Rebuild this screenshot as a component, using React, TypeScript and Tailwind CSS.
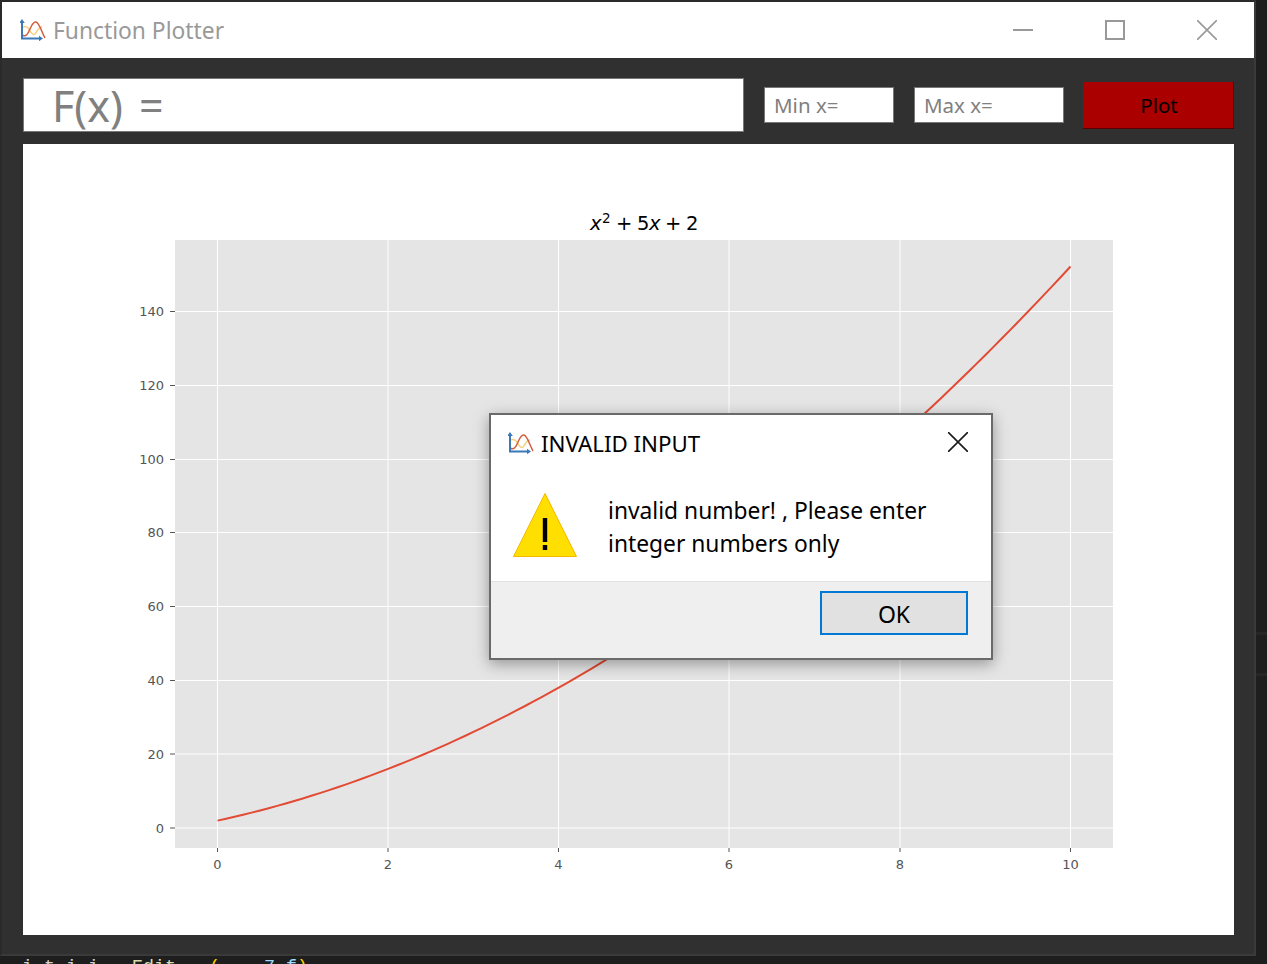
import React from "react"

const xTicks = [
  { label: "0", x: 217.5 },
  { label: "2", x: 388 },
  { label: "4", x: 558.5 },
  { label: "6", x: 729 },
  { label: "8", x: 900 },
  { label: "10", x: 1070.5 },
]

const yTicks = [
  { label: "0", y: 828 },
  { label: "20", y: 754 },
  { label: "40", y: 680.5 },
  { label: "60", y: 606.5 },
  { label: "80", y: 532.5 },
  { label: "100", y: 459.5 },
  { label: "120", y: 385.5 },
  { label: "140", y: 311.5 },
]

function curvePath() {
  const pts: string[] = []
  for (let i = 0; i <= 100; i++) {
    const v = i / 10
    const px = 217.5 + v * 85.3
    const py = 828 - 3.694 * (v * v + 5 * v + 2)
    pts.push(`${px.toFixed(2)},${py.toFixed(2)}`)
  }
  return "M" + pts.join(" L")
}

function AppIcon({ className }: { className: string }) {
  return (
    <svg viewBox="0 0 26 22" fill="none" className={className}>
      <path d="M1 9 C4 7 7 7 9 10 C11 14 13 16.5 15 15 C17 13 18 8 22 8" stroke="#f7cf7a" strokeWidth="1.4" />
      <path d="M2 16 C6 18.5 8 15 10 10 C12 5 14 2.5 16 3 C19.5 4 21.5 13 25 19" stroke="#d2603f" strokeWidth="1.5" />
      <path d="M2 3 V19.5 H20" stroke="#3a78b8" strokeWidth="2" />
      <path d="M2 0 L4.8 4 H-0.8 Z M23 19.5 L19 16.8 V22.2 Z" fill="#3a78b8" />
    </svg>
  )
}

function Chart() {
  return (
    <svg viewBox="23 144 1211 791" className="block w-full h-full" style={{ fontFamily: '"DejaVu Sans", sans-serif' }}>
      <rect x="175" y="240" width="938" height="608" fill="#e5e5e5" />
      {xTicks.map((t) => (
        <g key={t.label}>
          <line x1={t.x} x2={t.x} y1="240" y2="848" stroke="#fff" strokeWidth="1" />
          <line x1={t.x} x2={t.x} y1="848" y2="852" stroke="#555" strokeWidth="1" />
          <text x={t.x} y="869" textAnchor="middle" fontSize="13" fill="#555">
            {t.label}
          </text>
        </g>
      ))}
      {yTicks.map((t) => (
        <g key={t.label}>
          <line x1="175" x2="1113" y1={t.y} y2={t.y} stroke="#fff" strokeWidth="1" />
          <line x1="170" x2="175" y1={t.y} y2={t.y} stroke="#555" strokeWidth="1" />
          <text x="164" y={t.y + 4.5} textAnchor="end" fontSize="13" fill="#555">
            {t.label}
          </text>
        </g>
      ))}
      <path d={curvePath()} fill="none" stroke="#e24a33" strokeWidth="2" />
      <text y="230" fontSize="19.5" fill="#000">
        <tspan x="590" fontStyle="italic">x</tspan>
        <tspan x="602" y="223" fontSize="13.5">2</tspan>
        <tspan x="616" y="230">+</tspan>
        <tspan x="637">5</tspan>
        <tspan x="649" fontStyle="italic">x</tspan>
        <tspan x="665">+</tspan>
        <tspan x="686">2</tspan>
      </text>
    </svg>
  )
}

function Dialog() {
  return (
    <div className="absolute left-[489px] top-[413px] w-[504px] h-[247px] border-2 border-[#6a6a6a] bg-white shadow-[0_4px_14px_rgba(0,0,0,0.35)] flex flex-col text-black">
      <div className="flex items-center h-[56px] pl-[17px] pr-[23px]">
        <AppIcon className="w-[26px] h-[22px]" />
        <span className="ml-[7px] pt-[2px] text-[22.3px] leading-none">INVALID INPUT</span>
        <svg viewBox="0 0 20 20" className="ml-auto w-5 h-5 mb-[2px]" stroke="#1a1a1a" strokeWidth="1.6">
          <path d="M0 0 L20 20 M20 0 L0 20" />
        </svg>
      </div>
      <div className="flex flex-1 pl-[22px]">
        <svg viewBox="0 0 64 64" className="w-[64px] h-[64px] mt-[22px]">
          <path d="M32 .5 L63.5 63.5 H.5 Z" fill="#ffdf00" stroke="#f5b800" strokeWidth="1" />
          <rect x="29.8" y="25" width="4.4" height="24" fill="#000" />
          <rect x="29.8" y="52" width="4.4" height="5" fill="#000" />
        </svg>
        <p className="ml-[31px] mt-[24px] text-[22.8px] leading-[32.5px]">
          invalid number! , Please enter
          <br />
          integer numbers only
        </p>
      </div>
      <div className="h-[77px] bg-[#efefef] border-t border-[#e2e2e2] flex justify-end items-start pt-[9px] pr-[23px]">
        <div className="w-[148px] h-[44px] border-2 border-[#0078d4] bg-[#e1e1e1] flex items-center justify-center pt-[2px] text-[23px]">
          OK
        </div>
      </div>
    </div>
  )
}

export default function App() {
  return (
    <div
      className="relative w-[1267px] h-[964px] overflow-hidden bg-[#1e1e1e]"
      style={{ fontFamily: '"Noto Sans", "Open Sans", sans-serif' }}
    >
      <div className="w-[1256px] h-[956px] border-2 border-[#2a2a2a] bg-[#303030] border-b-[#3a3a3a] border-r-[#3a3a3a]">
        <div className="h-[56px] bg-white flex items-center pl-[18px] w-[1252px]">
          <AppIcon className="w-[26px] h-[22px]" />
          <span className="ml-[7px] pt-[2px] text-[22.8px] leading-none text-[#999]">Function Plotter</span>
          <div className="ml-auto flex items-center gap-[72px] pr-[37px] pb-[1px]">
            <div className="w-5 h-[2px] bg-[#999]" />
            <div className="w-5 h-5 border-2 border-[#999]" />
            <svg viewBox="0 0 20 20" className="w-5 h-5" stroke="#999" strokeWidth="1.6">
              <path d="M0 0 L20 20 M20 0 L0 20" />
            </svg>
          </div>
        </div>
        <div className="flex items-center h-[86px] pl-[21px] pt-[8px]">
          <div className="w-[721px] h-[54px] bg-white border border-[#777] flex items-center pl-[28px] pt-[2px] text-[43px] [word-spacing:5px] text-[#808080]">
            F(x) =
          </div>
          <div className="ml-[20px] w-[130px] h-[36px] bg-white border border-[#777] flex items-center pl-[9px] pt-[1px] text-[20.5px] text-[#808080]">
            Min x=
          </div>
          <div className="ml-[20px] w-[150px] h-[36px] bg-white border border-[#777] flex items-center pl-[9px] pt-[1px] text-[20.5px] text-[#808080]">
            Max x=
          </div>
          <div className="ml-[19px] w-[151px] h-[47px] bg-[#aa0000] border-b border-r border-[#5a0000] flex items-center justify-center pl-[2px] pt-[1px] text-[20.5px] text-black">
            Plot
          </div>
        </div>
        <div className="ml-[21px] w-[1211px] h-[791px] bg-white">
          <Chart />
        </div>
      </div>
      <div className="h-[8px] overflow-hidden pt-[2px] pl-[22px] whitespace-pre text-[18.33px] leading-[20px] text-[#dcdcaa]" style={{ fontFamily: '"Liberation Mono", monospace' }}>
        <span className="text-[#d4d4d4]">i t i i</span>
        <span>   Edit</span>
        <span className="text-[#ffd700]">   (</span>
        <span className="text-[#9cdcfe]">    7 f</span>
        <span className="text-[#ffd700]">)</span>
      </div>
      <div className="absolute right-0 top-[632px] w-[11px] h-[3px] bg-[#262626]" />
      <div className="absolute right-0 top-[673px] w-[11px] h-[3px] bg-[#262626]" />
      <Dialog />
    </div>
  )
}
